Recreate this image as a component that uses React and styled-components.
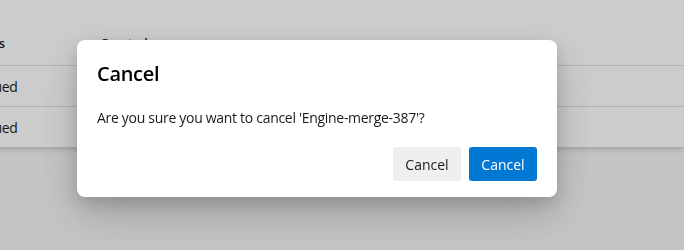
import styled, { createGlobalStyle } from 'styled-components'

const Global = createGlobalStyle`
html, body {
  margin: 0;
  padding: 0;
  height: 100%;
  overflow: hidden;
  background-color: #f5f5f5;
  font-family: "Open Sans", "Liberation Sans", sans-serif;
}
`

const Page = styled.div`
height: 250px;
overflow: hidden;
`

const Panel = styled.div`
background-color: #ffffff;
padding-top: 21px;
box-shadow: 0 2px 6px rgba(0, 0, 0, 0.18);
margin-left: -33px;
`

const Row = styled.div`
display: grid;
grid-template-columns: 133px 1fr;
align-items: center;
height: ${props => props.$header ? 44 : 40}px;
border-bottom: ${props => props.$last ? 'none' : '1px solid #e1dfdd'};
font-size: ${props => props.$header ? 13 : 14}px;
font-weight: ${props => props.$header ? 600 : 400};
letter-spacing: -0.3px;
color: #201f1e;
`

const Cell = styled.div`
white-space: nowrap;
`

const Overlay = styled.div`
position: fixed;
inset: 0;
background-color: rgba(0, 0, 0, 0.2);
display: flex;
align-items: flex-start;
padding: 40px 0 0 77px;
`

const Dialog = styled.div`
width: 480px;
box-sizing: border-box;
background-color: #ffffff;
border-radius: 8px;
padding: 20px 20px 16px 20px;
box-shadow: 0 6.4px 14.4px rgba(0, 0, 0, 0.13), 0 16px 40px rgba(0, 0, 0, 0.2);
`

const Title = styled.h2`
margin: 0;
font-size: 20px;
line-height: 28px;
font-weight: 600;
letter-spacing: -0.3px;
color: #000000;
`

const Body = styled.p`
margin: 20px 0 19px 0;
font-size: 14px;
line-height: 20px;
letter-spacing: -0.3px;
color: #1b1a19;
`

const Actions = styled.div`
display: flex;
justify-content: flex-end;
gap: 8px;
`

const Button = styled.button`
height: 34px;
width: 68px;
border: none;
border-radius: 3px;
font-family: inherit;
font-size: 14px;
cursor: pointer;
background-color: ${props => props.$primary ? '#0078d4' : '#efefef'};
color: ${props => props.$primary ? '#ffffff' : '#1b1a19'};
`

export default function App() {
    return (<>
        <Global />
        <Page>
            <Panel>
                <Row $header>
                    <Cell>Status</Cell>
                    <Cell>Created</Cell>
                </Row>
                <Row>
                    <Cell>Queued</Cell>
                    <Cell>2 minutes ago</Cell>
                </Row>
                <Row $last>
                    <Cell>Queued</Cell>
                    <Cell>5 minutes ago</Cell>
                </Row>
            </Panel>
        </Page>
        <Overlay>
            <Dialog role="dialog">
                <Title>Cancel</Title>
                <Body>Are you sure you want to cancel 'Engine-merge-387'?</Body>
                <Actions>
                    <Button>Cancel</Button>
                    <Button $primary>Cancel</Button>
                </Actions>
            </Dialog>
        </Overlay>
    </>)
}
